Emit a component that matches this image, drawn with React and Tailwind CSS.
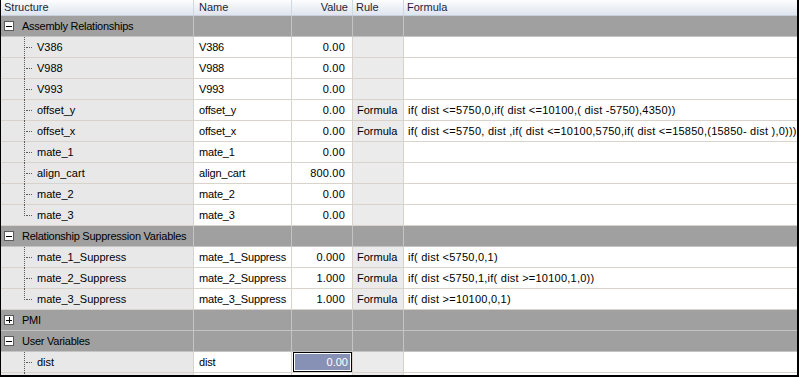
import React from "react";

const FONT = { fontFamily: '"Liberation Sans", Arial, sans-serif' };

const rows = [
  { type: "group", label: "Assembly Relationships", open: true },
  { type: "leaf", s: "V386", n: "V386", v: "0.00" },
  { type: "leaf", s: "V988", n: "V988", v: "0.00" },
  { type: "leaf", s: "V993", n: "V993", v: "0.00" },
  { type: "leaf", s: "offset_y", n: "offset_y", v: "0.00", r: "Formula", f: "if( dist <=5750,0,if( dist <=10100,( dist -5750),4350))" },
  {
    type: "leaf",
    s: "offset_x",
    n: "offset_x",
    v: "0.00",
    r: "Formula",
    f: "if( dist <=5750, dist ,if( dist <=10100,5750,if( dist <=15850,(15850- dist ),0)))",
  },
  { type: "leaf", s: "mate_1", n: "mate_1", v: "0.00" },
  { type: "leaf", s: "align_cart", n: "align_cart", v: "800.00" },
  { type: "leaf", s: "mate_2", n: "mate_2", v: "0.00" },
  { type: "leaf", s: "mate_3", n: "mate_3", v: "0.00", last: true },
  { type: "group", label: "Relationship Suppression Variables", open: true },
  { type: "leaf", s: "mate_1_Suppress", n: "mate_1_Suppress", v: "0.000", r: "Formula", f: "if( dist <5750,0,1)" },
  { type: "leaf", s: "mate_2_Suppress", n: "mate_2_Suppress", v: "1.000", r: "Formula", f: "if( dist <5750,1,if( dist >=10100,1,0))" },
  { type: "leaf", s: "mate_3_Suppress", n: "mate_3_Suppress", v: "1.000", r: "Formula", f: "if( dist >=10100,0,1)", last: true },
  { type: "group", label: "PMI", open: false },
  { type: "group", label: "User Variables", open: true },
  { type: "leaf", s: "dist", n: "dist", v: "0.00", selected: true },
  { type: "leaf", s: "", n: "", v: "" },
];

const GRID = "grid grid-cols-[193px_98px_61px_51px_1fr]";

function Toggle({ open }) {
  return (
    <span className="relative ml-[3px] mr-[8px] flex h-[10px] w-[10px] shrink-0 items-center justify-center border border-[#5a5a5a] bg-white">
      <span className="absolute h-px w-[6px] bg-black" />
      {!open ? <span className="absolute h-[6px] w-px bg-black" /> : null}
    </span>
  );
}

function GroupRow({ row }) {
  const cell = "h-[21px] border-b border-r border-[#c4c4c4] bg-[#a0a0a0]";
  return (
    <div className={GRID}>
      <div className={`${cell} flex items-center`}>
        <Toggle open={row.open} />
        <span className="whitespace-nowrap tracking-[-0.25px]">{row.label}</span>
      </div>
      <div className={cell} />
      <div className={cell} />
      <div className={cell} />
      <div className={`${cell} border-r-0`} />
    </div>
  );
}

function LeafRow({ row }) {
  const line = "border-b border-r border-[#d8d4cc]";
  return (
    <div className={GRID}>
      <div className={`${line} relative flex h-[21px] items-center bg-[#e8e8e8] pl-[36px]`}>
        <span
          className={`absolute left-[23px] top-0 w-0 border-l border-dotted border-[#5c5c5c] ${
            row.last ? "h-[11px]" : "h-[21px]"
          }`}
        />
        {row.s ? <span className="absolute left-[25px] top-[10px] h-0 w-[6px] border-t border-dotted border-[#5c5c5c]" /> : null}
        <span className="whitespace-nowrap">{row.s}</span>
      </div>
      <div className={`${line} flex h-[21px] items-center bg-white pl-[5px]`}>
        <span className="whitespace-nowrap tracking-[-0.15px]">{row.n}</span>
      </div>
      <div className={`${line} flex h-[21px] items-center justify-end bg-white`}>
        {row.selected ? (
          <div className="flex h-[20px] w-[59px] items-center justify-end border border-black bg-[#8791b6] pr-[3px] text-white shadow-[inset_0_0_0_1px_#ffffff]">
            {row.v}
          </div>
        ) : (
          <span className="pr-[7px] tracking-[0.2px]">{row.v}</span>
        )}
      </div>
      <div className={`${line} flex h-[21px] items-center bg-[#ebebeb] pl-[4px]`}>
        <span>{row.r}</span>
      </div>
      <div className="flex h-[21px] items-center border-b border-[#d8d4cc] bg-white pl-[4px]">
        <span className="whitespace-nowrap tracking-[0.24px]">{row.f}</span>
      </div>
    </div>
  );
}

export default function App() {
  return (
    <div
      style={FONT}
      className="h-[377px] w-[799px] overflow-hidden border-b-2 border-l border-r-2 border-black bg-white text-[11px] text-black"
    >
      <div className={`${GRID} h-[16px] border-b border-[#c9d0dc] bg-gradient-to-b from-[#fcfdfe] to-[#dfe5ee] text-[#1b1f3a]`}>
        <div className="flex items-center border-r border-[#d2d8e2] pl-[3px] leading-none">Structure</div>
        <div className="flex items-center border-r border-[#d2d8e2] pl-[5px] leading-none">Name</div>
        <div className="flex items-center justify-end border-r border-[#d2d8e2] pr-[4px] leading-none">Value</div>
        <div className="flex items-center border-r border-[#d2d8e2] pl-[3px] leading-none">Rule</div>
        <div className="flex items-center pl-[3px] leading-none">Formula</div>
      </div>
      {rows.map((row, i) =>
        row.type === "group" ? <GroupRow key={i} row={row} /> : <LeafRow key={i} row={row} />
      )}
    </div>
  );
}
